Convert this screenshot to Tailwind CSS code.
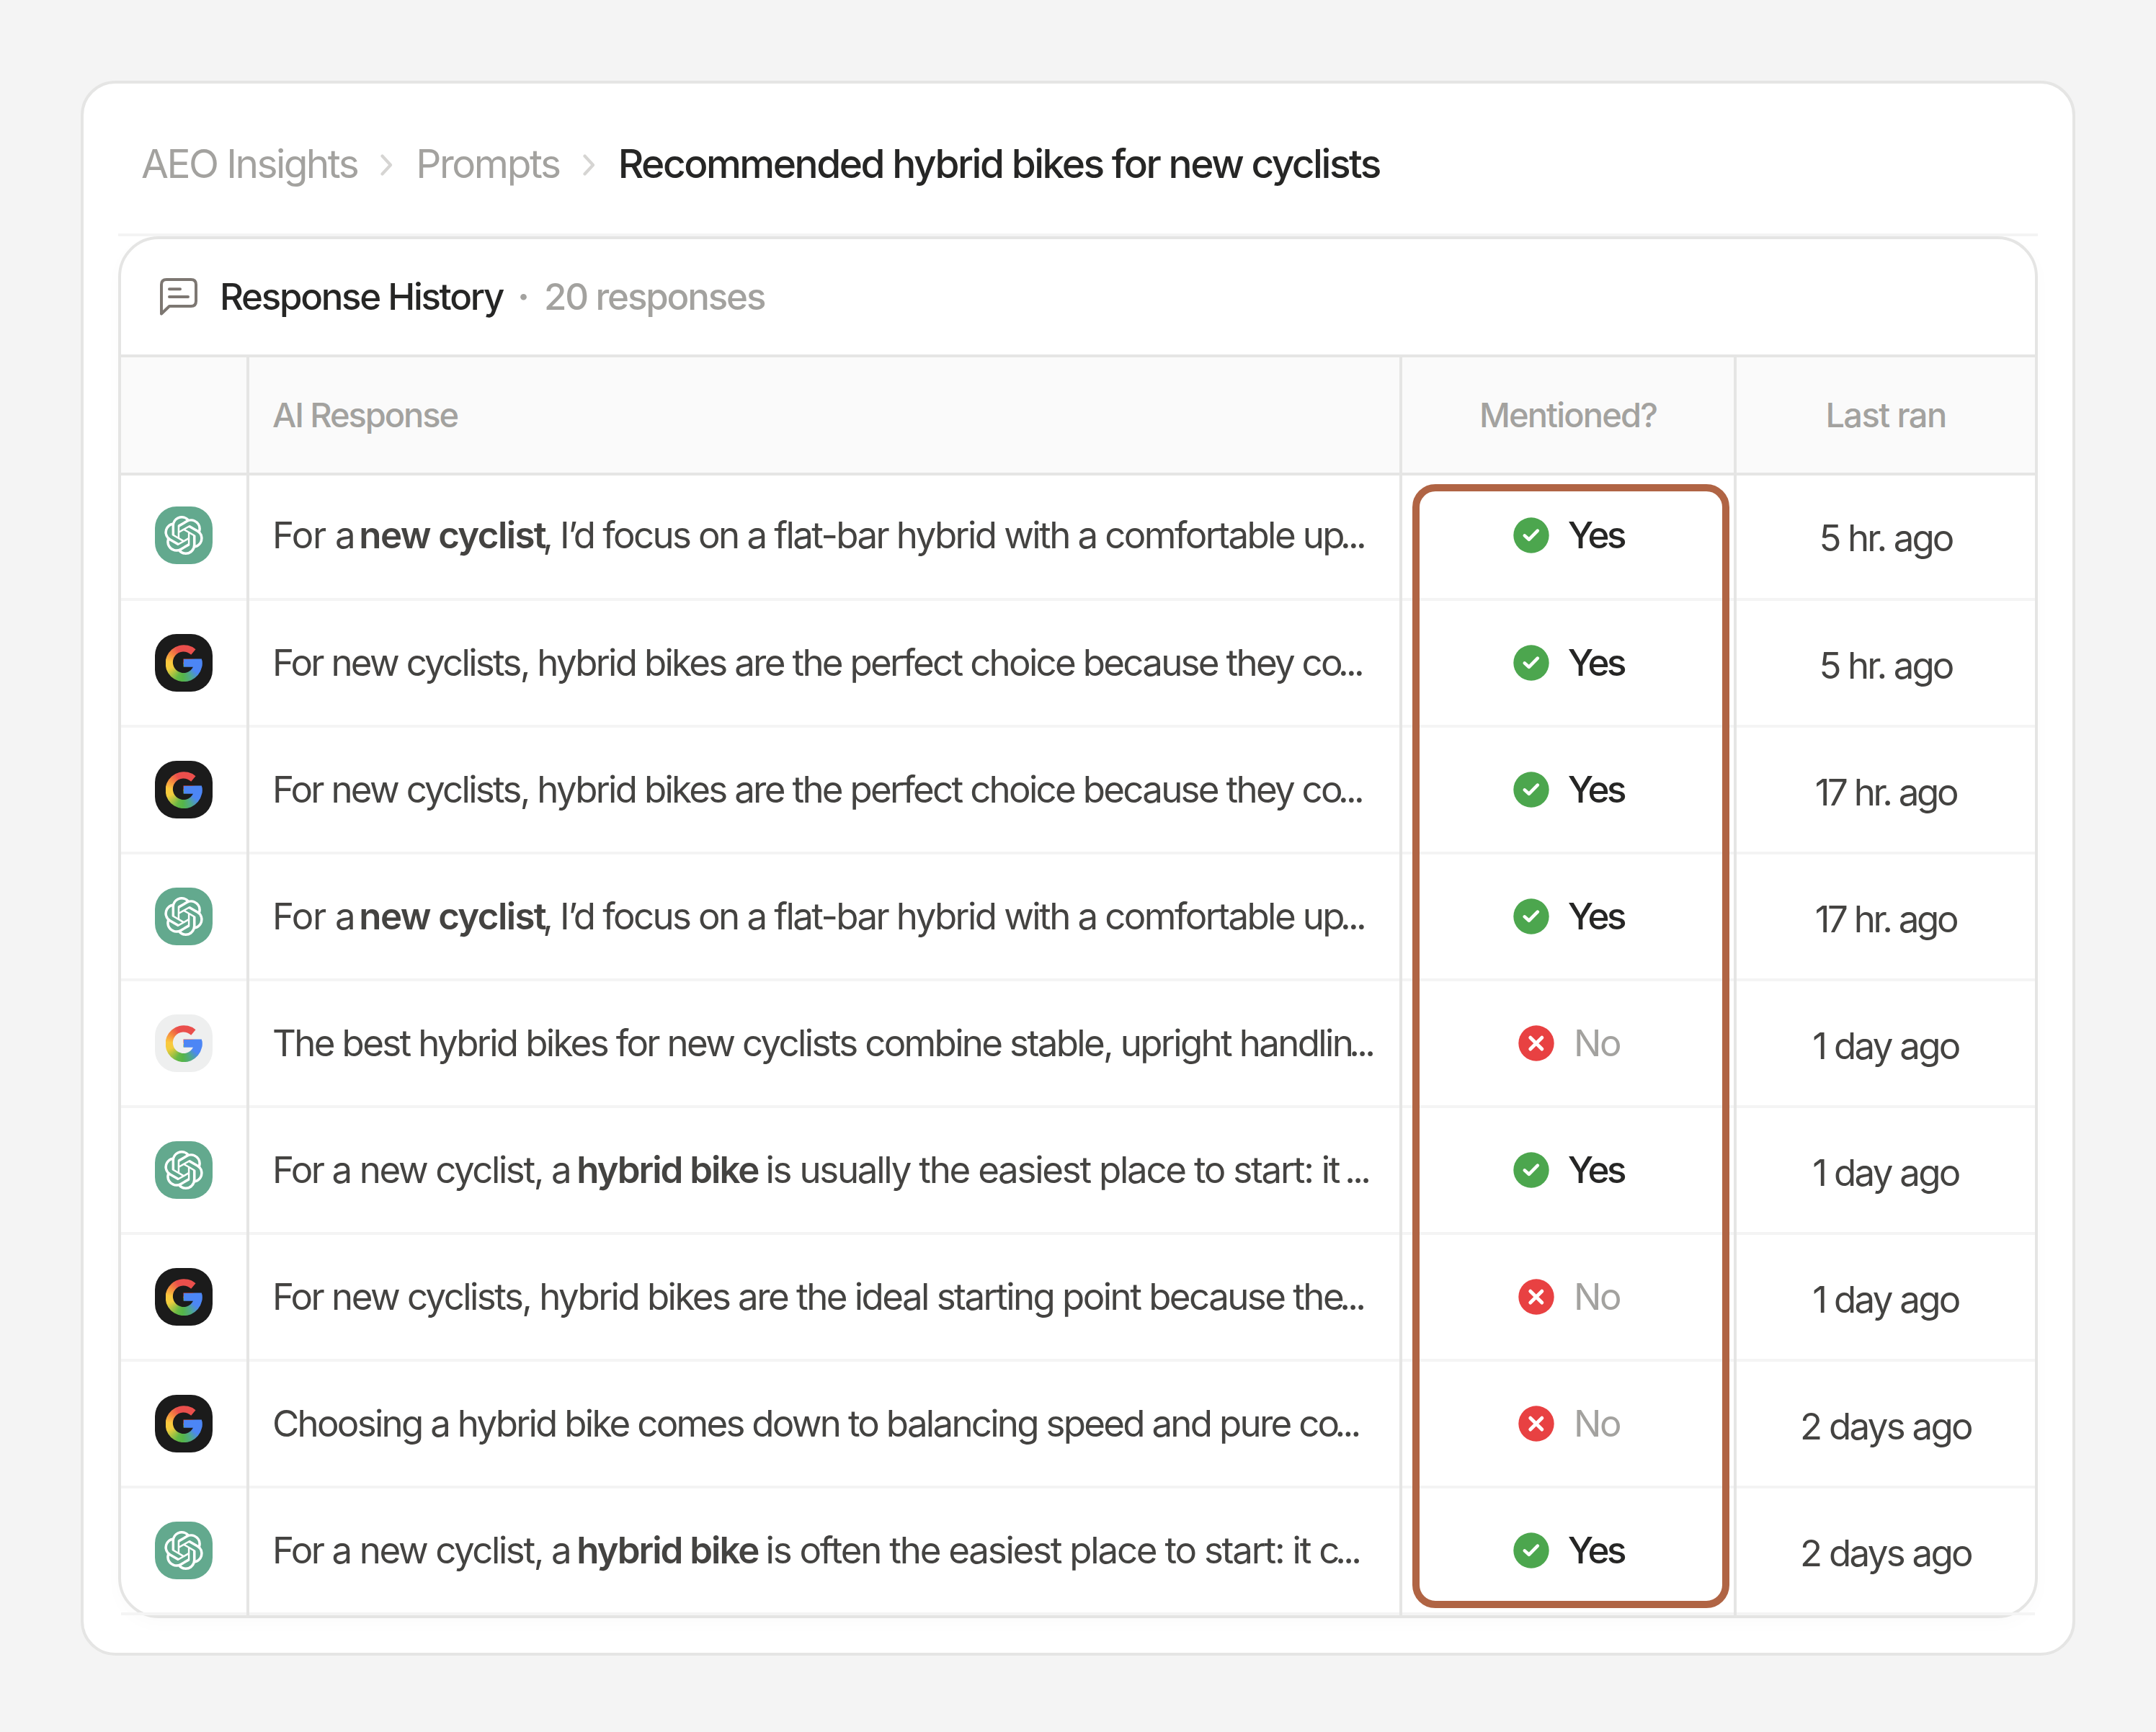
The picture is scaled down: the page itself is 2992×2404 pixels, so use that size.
<!DOCTYPE html>
<html lang="en">
<head>
  <meta charset="UTF-8" />
  <meta name="viewport" content="width=device-width, initial-scale=1" />
  <title>AEO Insights – Response History</title>
  <script src="https://cdn.jsdelivr.net/npm/@tailwindcss/browser@4"></script>
</head>
<body class="bg-[#f4f4f4] font-['Inter',sans-serif] text-[#444341] w-[2992px] h-[2404px] px-28 pt-28 overflow-hidden">

  <!-- Shared icons -->
  <svg class="hidden">
    <symbol id="chevron" viewBox="0 0 17 32">
      <path d="M2.5 3.5 L14 16 L2.5 28.5" fill="none" stroke="#d6d5d3" stroke-width="4.2" stroke-linecap="round" stroke-linejoin="round" />
    </symbol>
    <symbol id="openai" viewBox="0 0 24 24">
      <path fill="#fff" d="M22.2819 9.8211a5.9847 5.9847 0 0 0-.5157-4.9108 6.0462 6.0462 0 0 0-6.5098-2.9A6.0651 6.0651 0 0 0 4.9807 4.1818a5.9847 5.9847 0 0 0-3.9977 2.9 6.0462 6.0462 0 0 0 .7427 7.0966 5.98 5.98 0 0 0 .511 4.9107 6.051 6.051 0 0 0 6.5146 2.9001A5.9847 5.9847 0 0 0 13.2599 24a6.0557 6.0557 0 0 0 5.7718-4.2058 5.9894 5.9894 0 0 0 3.9977-2.9001 6.0557 6.0557 0 0 0-.7475-7.0729zm-9.022 12.6081a4.4755 4.4755 0 0 1-2.8764-1.0408l.1419-.0804 4.7783-2.7582a.7948.7948 0 0 0 .3927-.6813v-6.7369l2.02 1.1686a.071.071 0 0 1 .038.052v5.5826a4.504 4.504 0 0 1-4.4945 4.4944zm-9.6607-4.1254a4.4708 4.4708 0 0 1-.5346-3.0137l.142.0852 4.783 2.7582a.7712.7712 0 0 0 .7806 0l5.8428-3.3685v2.3324a.0804.0804 0 0 1-.0332.0615L9.74 19.9502a4.4992 4.4992 0 0 1-6.1408-1.6464zM2.3408 7.8956a4.485 4.485 0 0 1 2.3655-1.9728V11.6a.7664.7664 0 0 0 .3879.6765l5.8144 3.3543-2.0201 1.1685a.0757.0757 0 0 1-.071 0l-4.8303-2.7865A4.504 4.504 0 0 1 2.3408 7.872zm16.5963 3.8558L13.1038 8.364 15.1192 7.2a.0757.0757 0 0 1 .071 0l4.8303 2.7913a4.4944 4.4944 0 0 1-.6765 8.1042v-5.6772a.79.79 0 0 0-.407-.667zm2.0107-3.0231l-.142-.0852-4.7735-2.7818a.7759.7759 0 0 0-.7854 0L9.409 9.2297V6.8974a.0662.0662 0 0 1 .0284-.0615l4.8303-2.7866a4.4992 4.4992 0 0 1 6.6802 4.66zM8.3065 12.863l-2.02-1.1638a.0804.0804 0 0 1-.038-.0567V6.0742a4.4992 4.4992 0 0 1 7.3757-3.4537l-.142.0805L8.704 5.459a.7948.7948 0 0 0-.3927.6813zm1.0976-2.3654l2.602-1.4998 2.6069 1.4998v2.9994l-2.5974 1.4997-2.6067-1.4997Z" />
    </symbol>
    <symbol id="yes" viewBox="0 0 50 50">
      <circle cx="25" cy="25" r="24.7" fill="#4ca64e" />
      <path d="M15.8 25.4 L21.8 30.8 L33.8 18.6" fill="none" stroke="#fff" stroke-width="4.6" stroke-linecap="round" stroke-linejoin="round" />
    </symbol>
    <symbol id="no" viewBox="0 0 50 50">
      <circle cx="25" cy="25" r="24.7" fill="#e84142" />
      <path d="M16.8 17.2 L32.8 33 M32.8 17.2 L16.8 33" fill="none" stroke="#fff" stroke-width="5" stroke-linecap="round" />
    </symbol>
  </svg>

  <main class="w-[2768px] h-[2186px] bg-white border-4 border-[#e5e5e4] rounded-[48px] px-12">

    <!-- Breadcrumb -->
    <nav class="h-[212px] border-b-4 border-[#f4f4f4] pl-8 pt-3.5 flex items-center text-[55px] whitespace-nowrap">
      <span class="text-[#a3a29f] tracking-[-2.56px]">AEO Insights</span>
      <svg class="mx-8 w-[17px] h-8 mt-1 shrink-0"><use href="#chevron" /></svg>
      <span class="text-[#a3a29f] tracking-[-2.4px]">Prompts</span>
      <svg class="mx-8 w-[17px] h-8 mt-1 shrink-0"><use href="#chevron" /></svg>
      <span class="text-[#262625] font-medium tracking-[-2.46px]">Recommended hybrid bikes for new cyclists</span>
    </nav>

    <!-- Response history -->
    <section class="relative h-[1918px] border-4 border-[#e5e5e4] rounded-[56px] shadow-[0_8px_24px_rgba(0,0,0,0.02)] whitespace-nowrap">
      <header class="h-[164px] border-b-4 border-[#e5e5e4] pl-[54px] flex items-center text-[51px] font-medium">
        <svg class="w-[52px] h-[52px] shrink-0" viewBox="0 0 52 52" fill="none" stroke="#7d7772" stroke-width="4" stroke-linecap="round" stroke-linejoin="round">
          <path d="M2 49.5 V9 Q2 2 9 2 H43 Q50 2 50 9 V32 Q50 39 43 39 H13 Z" />
          <path d="M13 15.3 H28 M13 26 H39" />
        </svg>
        <h1 class="ml-[31px] text-[#262625] tracking-[-2.29px]">Response History</h1>
        <span class="w-[57px] text-center text-[#a3a29f] font-bold">·</span>
        <span class="text-[#a3a29f] tracking-[-2.15px]">20 responses</span>
      </header>

      <div class="h-[164px] grid grid-cols-[178px_1600px_464px_414px] bg-[#fafafa] border-b-4 border-[#e5e5e4] text-[47px] text-[#a3a29f] font-medium">
        <div class="border-r-4 border-[#e5e5e4]"></div>
        <div class="border-r-4 border-[#e5e5e4] pl-8 flex items-center tracking-[-2.1px]">AI Response</div>
        <div class="border-r-4 border-[#e5e5e4] flex items-center justify-center tracking-[-1.85px]">Mentioned?</div>
        <div class="flex items-center justify-center tracking-[-1.6px]">Last ran</div>
      </div>

      <div id="rows" class="text-[51px]"></div>

      <!-- Highlight around the Mentioned? column -->
      <div class="absolute left-[1792px] top-[340px] w-[440px] h-[1560px] border-[10px] border-[#b06444] rounded-[32px]"></div>
    </section>
  </main>

  <script>
    // the flat blue layer is the crossbar, the rest of the ring is a conic gradient
    const G = `<div class="w-[51px] h-[51px] [background:linear-gradient(#4c86f5,#4c86f5)_25px_20px/26px_11px_no-repeat,conic-gradient(#ea4f4c_0deg,#ea4f4c_60deg,#4c86f5_70deg,#4c86f5_125deg,#4fa98a_155deg,#55b548_185deg,#66b946_205deg,#f2cd3d_250deg,#fbc93e_275deg,#f58a3f_305deg,#ea4f4c_335deg,#ea4f4c_360deg)] [clip-path:path('M42_6.7_A25.5_25.5_0_1_0_50.3_20_H25_V31_H38.6_A14.8_14.8_0_1_1_35.7_14.3_Z')]"></div>`;

    const icons = {
      gpt: `<div class="w-20 h-20 rounded-[30px] bg-[#63a98e] flex items-center justify-center"><svg class="w-[54px] h-[54px]"><use href="#openai" /></svg></div>`,
      dark: `<div class="w-20 h-20 rounded-[30px] bg-[#1b1b1b] flex items-center justify-center">${G}</div>`,
      light: `<div class="w-20 h-20 rounded-[30px] bg-[#eeefef] flex items-center justify-center">${G}</div>`,
    };

    const yes = `<svg class="ml-[2px] w-[50px] h-[50px] mr-[26px]"><use href="#yes" /></svg><span class="text-[#262625] font-medium tracking-[-3.4px]">Yes</span>`;
    const no = `<svg class="ml-[3px] w-[50px] h-[50px] mr-[27px]"><use href="#no" /></svg><span class="text-[#a3a29f] tracking-[-2.4px]">No</span>`;

    const dots = `<span class="-ml-1 tracking-[-3.7px]">...</span>`;
    const flatBar = `<span class="tracking-[-1.3px]">For a</span><b class="ml-1.5 font-semibold tracking-[-1.6px]">new cyclist</b><span class="-ml-1 tracking-[-2.59px]">, I’d focus on a flat-bar hybrid with a comfortable up${dots}</span>`;
    const perfect = `<span class="tracking-[-2.7px]">For new cyclists, hybrid bikes are the perfect choice because they co${dots}</span>`;
    const hybrid = `<span class="tracking-[-2.4px]">For a new cyclist, a</span><b class="ml-[9px] mr-[10px] font-semibold tracking-[-2px]">hybrid bike</b>`;

    const rows = [
      ['gpt', flatBar, yes, '<span class="tracking-[-2.9px]">5 hr. ago</span>'],
      ['dark', perfect, yes, '<span class="tracking-[-2.9px]">5 hr. ago</span>'],
      ['dark', perfect, yes, '<span class="tracking-[-3.3px]">17 hr. ago</span>'],
      ['gpt', flatBar, yes, '<span class="tracking-[-3.3px]">17 hr. ago</span>'],
      ['light', `<span class="tracking-[-2.65px]">The best hybrid bikes for new cyclists combine stable, upright handlin${dots}</span>`, no, '<span class="tracking-[-2.7px]">1 day ago</span>'],
      ['gpt', `${hybrid}<span class="tracking-[-2.25px]">is usually the easiest place to start: it ${dots}</span>`, yes, '<span class="tracking-[-2.7px]">1 day ago</span>'],
      ['dark', `<span class="tracking-[-2.54px]">For new cyclists, hybrid bikes are the ideal starting point because the${dots}</span>`, no, '<span class="tracking-[-2.7px]">1 day ago</span>'],
      ['dark', `<span class="tracking-[-2.71px]">Choosing a hybrid bike comes down to balancing speed and pure co${dots}</span>`, no, '<span class="tracking-[-2.7px]">2 days ago</span>'],
      ['gpt', `${hybrid}<span class="tracking-[-2.22px]">is often the easiest place to start: it c${dots}</span>`, yes, '<span class="tracking-[-2.7px]">2 days ago</span>'],
    ];

    document.getElementById('rows').innerHTML = rows.map(([icon, text, mentioned, ran], i) => {
      const size = i === 0 ? 'h-[174px]' : 'h-[176px]';
      const pad = i === 0 ? 'pb-2' : 'pb-1';
      const cell = `flex items-center border-[#e5e5e4] shadow-[inset_0_-4px_0_#f4f4f4] ${pad}`;
      return `
        <div class="${size} grid grid-cols-[178px_1600px_464px_414px]">
          <div class="${cell} border-r-4 justify-center">${icons[icon]}</div>
          <div class="${cell} border-r-4 pl-8">${text}</div>
          <div class="${cell} border-r-4 justify-center">${mentioned}</div>
          <div class="${cell} justify-center"><div class="pt-2">${ran}</div></div>
        </div>`;
    }).join('');
  </script>
</body>
</html>
